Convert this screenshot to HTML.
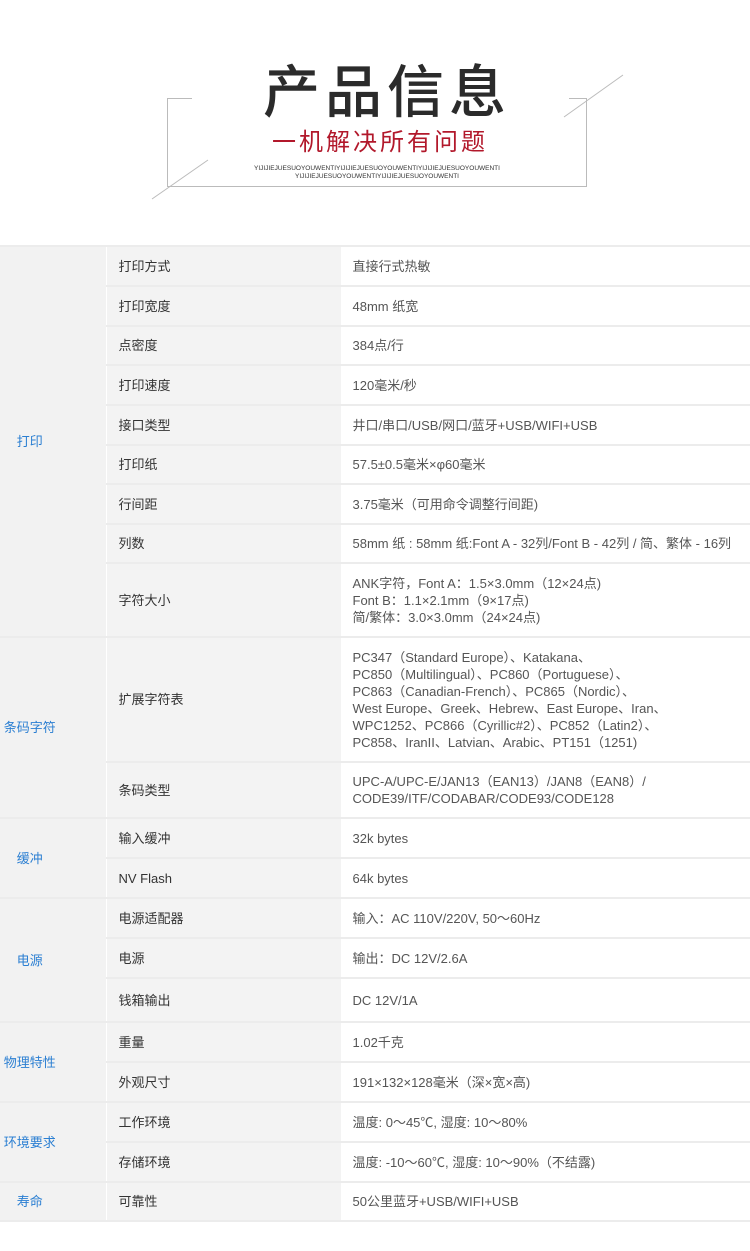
<!DOCTYPE html>
<html><head><meta charset="utf-8"><style>
body{margin:0;width:750px;height:1251px;background:#fff;position:relative;overflow:hidden;font-family:"Liberation Sans","Noto Sans CJK SC",sans-serif;}
.a{position:absolute}
table{position:absolute;left:0;top:245px;width:750px;border-collapse:collapse;table-layout:fixed;font-size:13px;}
td{border-top:2px solid #ececec;border-bottom:2px solid #ececec;padding:0;vertical-align:middle;line-height:17px}
td.c{background:#f2f2f2;color:#2b7fd2;text-align:center;width:106px;border-right:1px solid #fff;padding-right:46px;box-sizing:border-box;white-space:nowrap}
td.k{background:#f3f3f3;color:#333;padding-left:12px;width:222px}
td.v{color:#555;padding-left:12px}
</style></head><body>
<div class="a" style="left:167px;top:98px;width:420px;height:89px;border:1px solid #bbb;border-top:none;box-sizing:border-box"></div>
<div class="a" style="left:167px;top:98px;width:25px;border-top:1px solid #bbb"></div>
<div class="a" style="left:569px;top:98px;width:18px;border-top:1px solid #bbb"></div>
<svg class="a" style="left:0;top:0" width="750" height="220"><line x1="152" y1="199" x2="208" y2="160" stroke="#bbb"/><line x1="564" y1="117" x2="623" y2="75" stroke="#bbb"/></svg>
<div class="a" style="left:0;width:750px;top:52px;text-align:center;font-size:57px;font-weight:500;color:#2b2b2b;letter-spacing:5px;padding-left:24px;box-sizing:border-box;line-height:72px;font-family:'Noto Sans CJK SC',sans-serif">产品信息</div>
<div class="a" style="left:0;width:750px;top:124px;text-align:center;font-size:24px;color:#b2182b;letter-spacing:3px;padding-left:10px;box-sizing:border-box;line-height:32px;font-family:'Noto Sans CJK SC',sans-serif">一机解决所有问题</div>
<div class="a" style="left:0;width:750px;top:165px;text-align:center;font-size:6.5px;color:#333;line-height:8px;padding-left:4px;box-sizing:border-box">YIJIJIEJUESUOYOUWENTIYIJIJIEJUESUOYOUWENTIYIJIJIEJUESUOYOUWENTI<br>YIJIJIEJUESUOYOUWENTIYIJIJIEJUESUOYOUWENTI</div>
<table>
<tr style="height:40px"><td class="c" rowspan="9">打印</td><td class="k">打印方式</td><td class="v">直接行式热敏</td></tr>
<tr style="height:40px"><td class="k">打印宽度</td><td class="v">48mm 纸宽</td></tr>
<tr style="height:39px"><td class="k">点密度</td><td class="v">384点/行</td></tr>
<tr style="height:40px"><td class="k">打印速度</td><td class="v">120毫米/秒</td></tr>
<tr style="height:40px"><td class="k">接口类型</td><td class="v">井口/串口/USB/网口/蓝牙+USB/WIFI+USB</td></tr>
<tr style="height:39px"><td class="k">打印纸</td><td class="v">57.5±0.5毫米×φ60毫米</td></tr>
<tr style="height:40px"><td class="k">行间距</td><td class="v">3.75毫米（可用命令调整行间距)</td></tr>
<tr style="height:39px"><td class="k">列数</td><td class="v" style="white-space:nowrap">58mm 纸 : 58mm 纸:Font A - 32列/Font B - 42列 / 简、繁体 - 16列</td></tr>
<tr style="height:74px"><td class="k">字符大小</td><td class="v">ANK字符，Font A：1.5×3.0mm（12×24点)<br>Font B：1.1×2.1mm（9×17点)<br>简/繁体：3.0×3.0mm（24×24点)</td></tr>
<tr style="height:125px"><td class="c" rowspan="2">条码字符</td><td class="k">扩展字符表</td><td class="v">PC347（Standard Europe）、Katakana、<br>PC850（Multilingual）、PC860（Portuguese）、<br>PC863（Canadian-French）、PC865（Nordic）、<br>West Europe、Greek、Hebrew、East Europe、Iran、<br>WPC1252、PC866（Cyrillic#2）、PC852（Latin2）、<br>PC858、IranII、Latvian、Arabic、PT151（1251)</td></tr>
<tr style="height:56px"><td class="k">条码类型</td><td class="v">UPC-A/UPC-E/JAN13（EAN13）/JAN8（EAN8）/<br>CODE39/ITF/CODABAR/CODE93/CODE128</td></tr>
<tr style="height:40px"><td class="c" rowspan="2">缓冲</td><td class="k">输入缓冲</td><td class="v">32k bytes</td></tr>
<tr style="height:40px"><td class="k">NV Flash</td><td class="v">64k bytes</td></tr>
<tr style="height:40px"><td class="c" rowspan="3">电源</td><td class="k">电源适配器</td><td class="v">输入：AC 110V/220V, 50～60Hz</td></tr>
<tr style="height:40px"><td class="k">电源</td><td class="v">输出：DC 12V/2.6A</td></tr>
<tr style="height:44px"><td class="k">钱箱输出</td><td class="v">DC 12V/1A</td></tr>
<tr style="height:40px"><td class="c" rowspan="2">物理特性</td><td class="k">重量</td><td class="v">1.02千克</td></tr>
<tr style="height:40px"><td class="k">外观尺寸</td><td class="v">191×132×128毫米（深×宽×高)</td></tr>
<tr style="height:40px"><td class="c" rowspan="2">环境要求</td><td class="k">工作环境</td><td class="v">温度: 0～45℃, 湿度: 10～80%</td></tr>
<tr style="height:40px"><td class="k">存储环境</td><td class="v">温度: -10～60℃, 湿度: 10～90%（不结露)</td></tr>
<tr style="height:39px"><td class="c">寿命</td><td class="k">可靠性</td><td class="v">50公里蓝牙+USB/WIFI+USB</td></tr>
</table>
</body></html>
